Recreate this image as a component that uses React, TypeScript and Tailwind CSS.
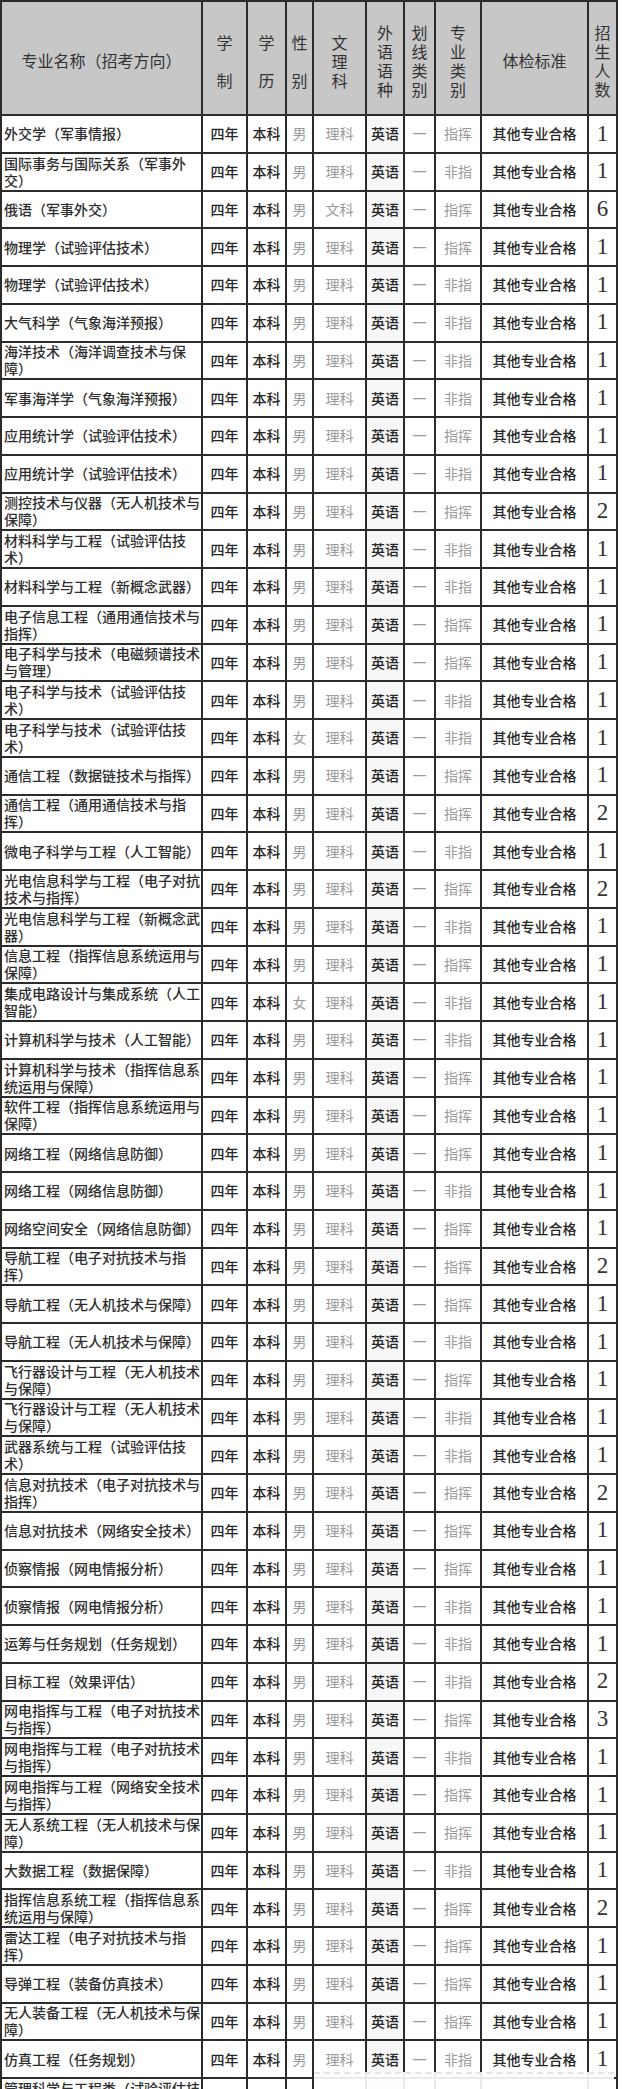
import React from 'react'

type Row = { name: string; sex?: string; ke?: string; lei: string; n: number }

const rows: Row[] = [
  { name: '外交学（军事情报）', lei: '指挥', n: 1 },
  { name: '国际事务与国际关系（军事外交）', lei: '非指', n: 1 },
  { name: '俄语（军事外交）', ke: '文科', lei: '指挥', n: 6 },
  { name: '物理学（试验评估技术）', lei: '指挥', n: 1 },
  { name: '物理学（试验评估技术）', lei: '非指', n: 1 },
  { name: '大气科学（气象海洋预报）', lei: '非指', n: 1 },
  { name: '海洋技术（海洋调查技术与保障）', lei: '非指', n: 1 },
  { name: '军事海洋学（气象海洋预报）', lei: '非指', n: 1 },
  { name: '应用统计学（试验评估技术）', lei: '指挥', n: 1 },
  { name: '应用统计学（试验评估技术）', lei: '非指', n: 1 },
  { name: '测控技术与仪器（无人机技术与保障）', lei: '指挥', n: 2 },
  { name: '材料科学与工程（试验评估技术）', lei: '非指', n: 1 },
  { name: '材料科学与工程（新概念武器）', lei: '非指', n: 1 },
  { name: '电子信息工程（通用通信技术与指挥）', lei: '指挥', n: 1 },
  { name: '电子科学与技术（电磁频谱技术与管理）', lei: '指挥', n: 1 },
  { name: '电子科学与技术（试验评估技术）', lei: '非指', n: 1 },
  { name: '电子科学与技术（试验评估技术）', sex: '女', lei: '非指', n: 1 },
  { name: '通信工程（数据链技术与指挥）', lei: '指挥', n: 1 },
  { name: '通信工程（通用通信技术与指挥）', lei: '指挥', n: 2 },
  { name: '微电子科学与工程（人工智能）', lei: '非指', n: 1 },
  { name: '光电信息科学与工程（电子对抗技术与指挥）', lei: '指挥', n: 2 },
  { name: '光电信息科学与工程（新概念武器）', lei: '非指', n: 1 },
  { name: '信息工程（指挥信息系统运用与保障）', lei: '指挥', n: 1 },
  { name: '集成电路设计与集成系统（人工智能）', sex: '女', lei: '非指', n: 1 },
  { name: '计算机科学与技术（人工智能）', lei: '非指', n: 1 },
  { name: '计算机科学与技术（指挥信息系统运用与保障）', lei: '指挥', n: 1 },
  { name: '软件工程（指挥信息系统运用与保障）', lei: '指挥', n: 1 },
  { name: '网络工程（网络信息防御）', lei: '指挥', n: 1 },
  { name: '网络工程（网络信息防御）', lei: '非指', n: 1 },
  { name: '网络空间安全（网络信息防御）', lei: '指挥', n: 1 },
  { name: '导航工程（电子对抗技术与指挥）', lei: '指挥', n: 2 },
  { name: '导航工程（无人机技术与保障）', lei: '指挥', n: 1 },
  { name: '导航工程（无人机技术与保障）', lei: '非指', n: 1 },
  { name: '飞行器设计与工程（无人机技术与保障）', lei: '指挥', n: 1 },
  { name: '飞行器设计与工程（无人机技术与保障）', lei: '非指', n: 1 },
  { name: '武器系统与工程（试验评估技术）', lei: '非指', n: 1 },
  { name: '信息对抗技术（电子对抗技术与指挥）', lei: '指挥', n: 2 },
  { name: '信息对抗技术（网络安全技术）', lei: '指挥', n: 1 },
  { name: '侦察情报（网电情报分析）', lei: '指挥', n: 1 },
  { name: '侦察情报（网电情报分析）', lei: '非指', n: 1 },
  { name: '运筹与任务规划（任务规划）', lei: '非指', n: 1 },
  { name: '目标工程（效果评估）', lei: '非指', n: 2 },
  { name: '网电指挥与工程（电子对抗技术与指挥）', lei: '指挥', n: 3 },
  { name: '网电指挥与工程（电子对抗技术与指挥）', lei: '非指', n: 1 },
  { name: '网电指挥与工程（网络安全技术与指挥）', lei: '指挥', n: 1 },
  { name: '无人系统工程（无人机技术与保障）', lei: '指挥', n: 1 },
  { name: '大数据工程（数据保障）', lei: '非指', n: 1 },
  { name: '指挥信息系统工程（指挥信息系统运用与保障）', lei: '指挥', n: 2 },
  { name: '雷达工程（电子对抗技术与指挥）', lei: '指挥', n: 1 },
  { name: '导弹工程（装备仿真技术）', lei: '指挥', n: 1 },
  { name: '无人装备工程（无人机技术与保障）', lei: '指挥', n: 1 },
  { name: '仿真工程（任务规划）', lei: '非指', n: 1 },
  { name: '管理科学与工程类（试验评估技术）', lei: '非指', n: 1 },
]

const cell = 'border-r-2 border-b-2 border-[#2b2b2b] flex items-center justify-center'
const dark = 'text-[#262626] font-medium'
const light = 'text-[#9a9a9a]'

function Vert({ chars, gap }: { chars: string; gap: string }) {
  return (
    <div className={`${cell} bg-[#c7c7c7] flex-col ${gap} pt-[6px] leading-[19px]`}>
      {chars.split('').map((c, i) => (
        <span key={i}>{c}</span>
      ))}
    </div>
  )
}

export default function App() {
  return (
    <div
      className="relative w-[630px] bg-white"
      style={{ fontFamily: '"Noto Sans CJK SC", "Noto Sans", sans-serif' }}
    >
      <div className="w-[618px] border-l-2 border-t-2 border-[#2b2b2b] grid grid-cols-[201px_45px_39px_27px_53px_38px_31px_46px_107px_29px] grid-rows-[114px] auto-rows-[37.75px]">
        {/* header */}
        <div className={`${cell} bg-[#c7c7c7] text-[16px] text-[#333] pt-[4px]`}>专业名称（招考方向）</div>
        <div className="contents text-[16px] text-[#333]">
          <Vert chars="学制" gap="gap-[19px]" />
          <Vert chars="学历" gap="gap-[19px]" />
          <Vert chars="性别" gap="gap-[19px]" />
          <Vert chars="文理科" gap="gap-0" />
          <Vert chars="外语语种" gap="gap-0" />
          <Vert chars="划线类别" gap="gap-0" />
          <Vert chars="专业类别" gap="gap-0" />
        </div>
        <div className={`${cell} bg-[#c7c7c7] text-[16px] text-[#333] pt-[4px]`}>体检标准</div>
        <div className={`${cell} bg-[#c7c7c7] text-[16px] text-[#333] flex-col pt-[6px] leading-[19px]`}>
          <span>招</span>
          <span>生</span>
          <span>人</span>
          <span>数</span>
        </div>

        {/* rows */}
        {rows.map((r, i) => (
          <div key={i} className="contents text-[14px]">
            <div className="border-r-2 border-b-2 border-[#2b2b2b] flex items-center pl-[2px] leading-[17px] text-[#2e2e2e] font-medium overflow-hidden">
              {r.name}
            </div>
            <div className={`${cell} ${dark}`}>四年</div>
            <div className={`${cell} ${dark}`}>本科</div>
            <div className={`${cell} ${light}`}>{r.sex ?? '男'}</div>
            <div className={`${cell} ${light}`}>{r.ke ?? '理科'}</div>
            <div className={`${cell} ${dark} bg-[#f7f7f7]`}>英语</div>
            <div className={`${cell} ${light}`}>一</div>
            <div className={`${cell} ${light}`}>{r.lei}</div>
            <div className={`${cell} ${dark}`}>其他专业合格</div>
            <div
              className={`${cell} text-[23px] text-[#333]`}
              style={{ fontFamily: '"Liberation Serif", serif' }}
            >
              {r.n}
            </div>
          </div>
        ))}
      </div>

      {/* watermark patch at bottom */}
      <div className="absolute left-[314px] top-[2072px] w-[300px] h-[40px] bg-white/90 border-t-2 border-dashed border-[#e4e4e4]" />
    </div>
  )
}
